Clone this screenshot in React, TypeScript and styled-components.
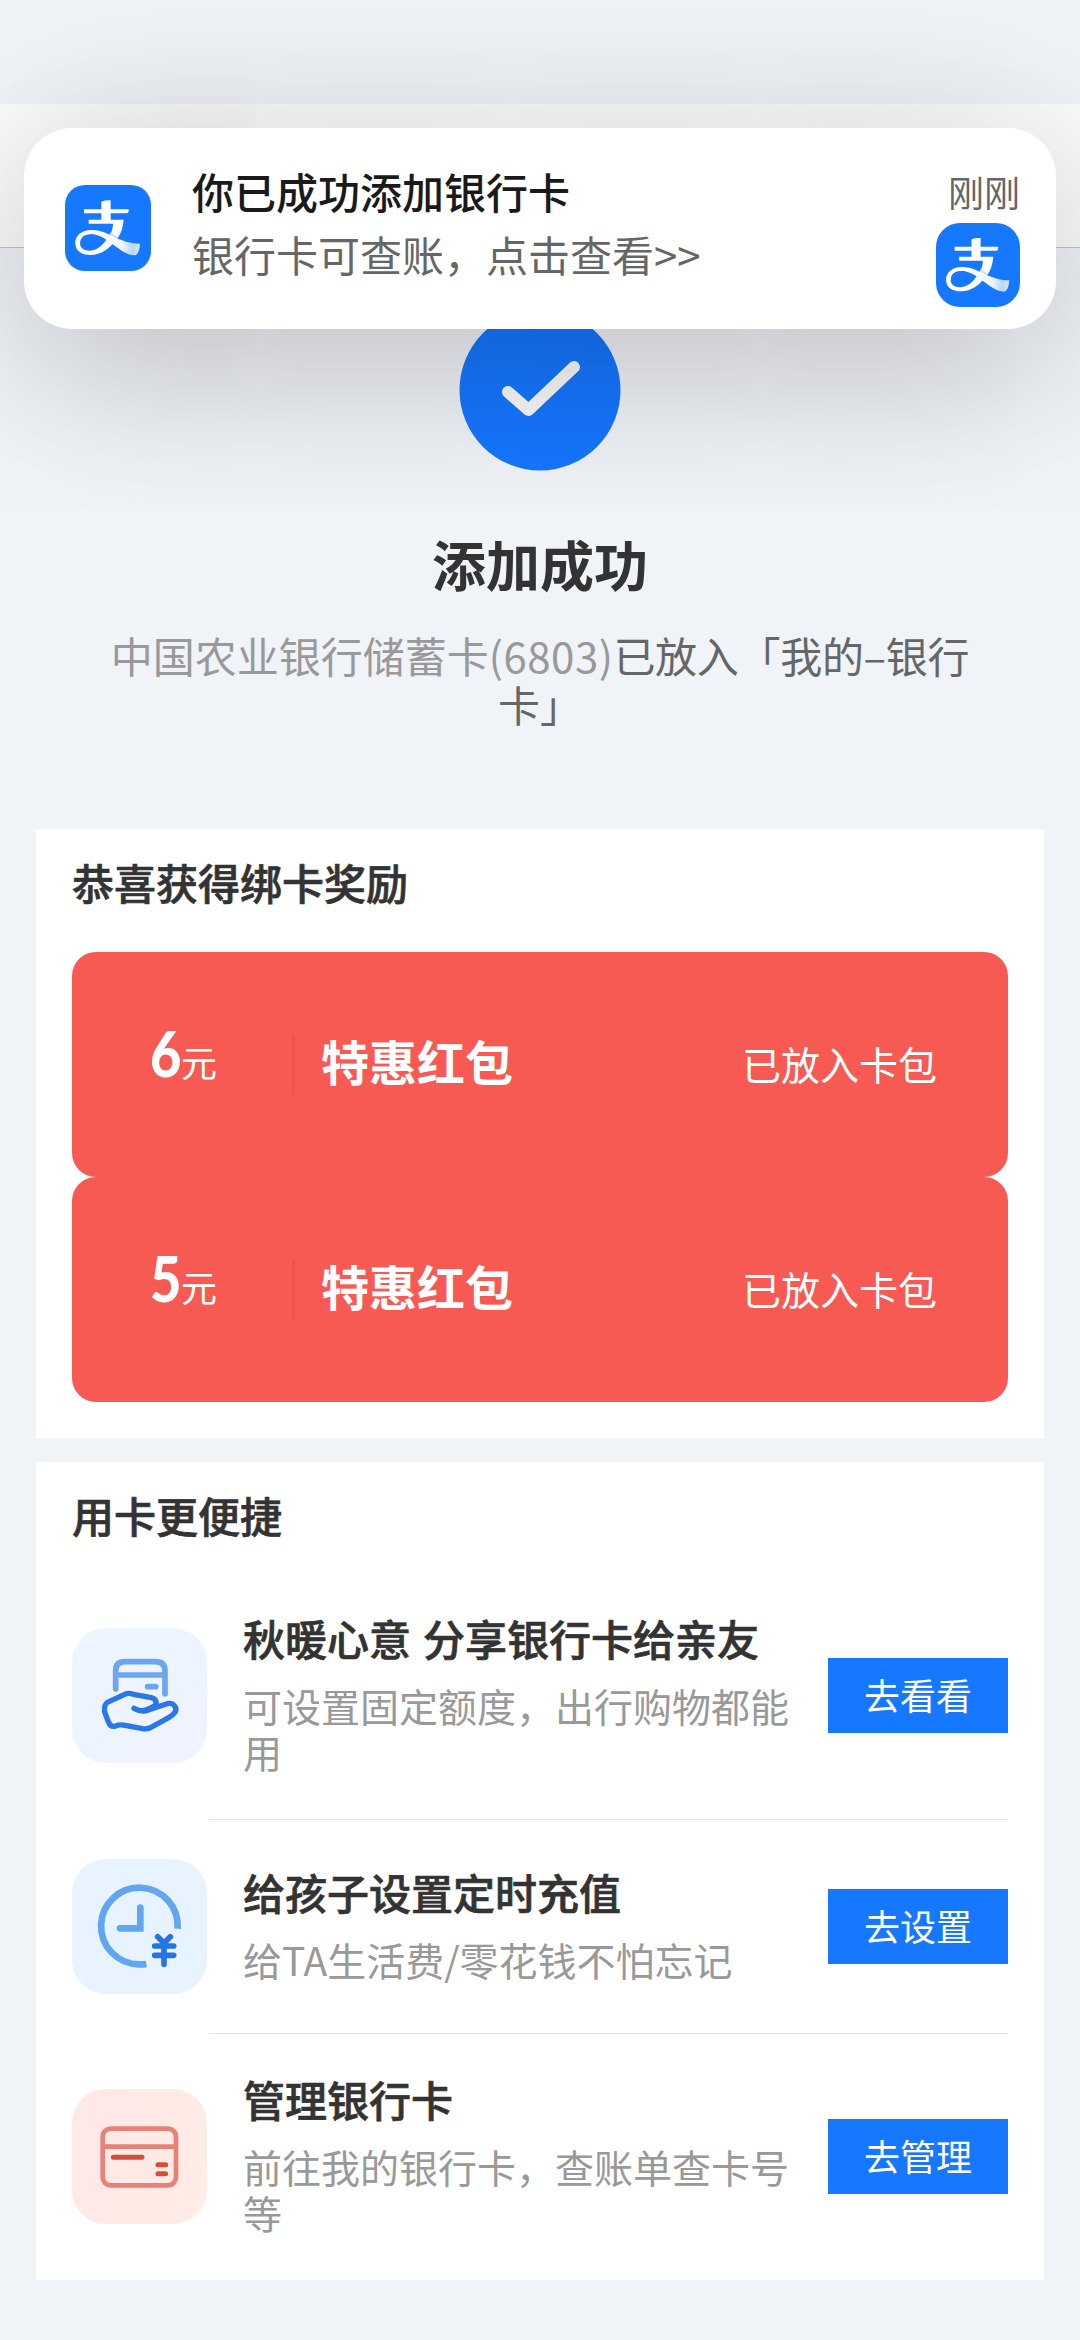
import React from "react";
import styled, { createGlobalStyle } from "styled-components";

const GlobalStyle = createGlobalStyle`
  * { box-sizing: border-box; }
  body {
    margin: 0;
    background: #f0f3f8;
    font-family: "Noto Sans CJK SC", "Noto Sans", sans-serif;
    color: #333;
  }
`;

const Screen = styled.div`
  position: relative;
  width: 1080px;
  height: 2340px;
  overflow: hidden;
  display: flex;
  flex-direction: column;
  background: #f0f3f8;
`;

const StatusBar = styled.div`
  flex: none;
  height: 104px;
`;

const NavBar = styled.header`
  flex: none;
  height: 144px;
  background: #fcfcfc;
  border-bottom: 1px solid #c3c4c6;
`;

const Notification = styled.aside`
  position: absolute;
  top: 128px;
  left: 24px;
  width: 1032px;
  height: 201px;
  padding: 0 36px 0 41px;
  display: flex;
  align-items: flex-start;
  background: #fff;
  border-radius: 48px;
  box-shadow: 0 0 170px rgba(0, 0, 0, 0.15), 0 70px 170px rgba(0, 0, 0, 0.11);
`;

const LogoTile = styled.div<{ $size: number; $radius: number }>`
  width: ${(p) => p.$size}px;
  height: ${(p) => p.$size}px;
  border-radius: ${(p) => p.$radius}px;
  background: #1677ff;
  overflow: hidden;
  svg { display: block; width: 100%; height: 100%; }
`;

const NoticeIcon = styled.div`
  padding-top: 57px;
`;

const NoticeText = styled.div`
  flex: 1;
  padding: 31px 0 0 41px;
  font-size: 42px;
  line-height: 63px;
`;

const NoticeTitle = styled.div`
  font-weight: 500;
  color: #1a1a1a;
`;

const NoticeBody = styled.div`
  color: #666;
`;

const NoticeAside = styled.div`
  display: flex;
  flex-direction: column;
  align-items: flex-end;
  gap: 12px;
  padding-top: 43px;
`;

const NoticeTime = styled.span`
  font-size: 36px;
  line-height: 40px;
  color: #666;
`;

const Hero = styled.section`
  flex: none;
  height: 581px;
  padding-top: 61px;
  display: flex;
  flex-direction: column;
  align-items: center;
`;

const SuccessMark = styled.svg`
  display: block;
  width: 162px;
  height: 162px;
`;

const HeroTitle = styled.h1`
  margin: 63px 0 0;
  font-size: 54px;
  line-height: 60px;
  font-weight: 700;
`;

const HeroDesc = styled.div`
  margin-top: 36px;
  display: flex;
  flex-direction: column;
  align-items: center;
  font-size: 42px;
  line-height: 49px;
  color: #666;
`;

const HeroLine = styled.div`
  display: flex;
  white-space: nowrap;
`;

const Muted = styled.span`
  color: #999;
`;

const CardTail = styled.span`
  color: #999;
  letter-spacing: 0.5px;
`;

const Destination = styled.span`
  letter-spacing: -0.3px;
`;

const Card = styled.section`
  flex: none;
  margin: 0 36px 24px;
  padding: 23px 36px 0;
  background: #fff;
`;

const CardTitle = styled.h2`
  margin: 0;
  font-size: 42px;
  line-height: 60px;
  font-weight: 500;
  -webkit-text-stroke: 0.7px currentColor;
`;

const CouponList = styled.div`
  padding: 40px 0 36px;
`;

const Coupon = styled.div`
  height: 225px;
  padding-right: 71px;
  display: flex;
  align-items: center;
  border-radius: 24px;
  background: #f75a53;
  color: #fff;
`;

const Amount = styled.div`
  width: 220px;
  padding: 0 0 16px 78px;
  display: flex;
  align-items: baseline;
  line-height: 60px;
`;

const AmountValue = styled.span`
  width: 31px;
  font-family: Lato, "Noto Sans CJK SC", sans-serif;
  font-size: 63px;
  font-weight: 900;
  transform: scaleX(0.86);
  transform-origin: left center;
`;

const AmountUnit = styled.span`
  font-size: 36px;
`;

const CouponRule = styled.div`
  width: 3px;
  height: 60px;
  background: #f1524e;
`;

const CouponName = styled.div`
  flex: 1;
  padding: 0 0 9px 26px;
  font-size: 48px;
  line-height: 60px;
  font-weight: 700;
`;

const CouponState = styled.div`
  padding-bottom: 4px;
  font-size: 39px;
  line-height: 60px;
`;

const TaskList = styled.div`
  padding: 27px 0 1px;
`;

const Task = styled.div<{ $height: number }>`
  display: flex;
  align-items: center;
  height: ${(p) => p.$height}px;
`;

const TaskIcon = styled.svg`
  flex: none;
  width: 135px;
  height: 135px;
  margin: 0 2px 1px 0;
  border-radius: 34px;
`;

const TaskBody = styled.div<{ $divided: boolean }>`
  flex: 1;
  height: 100%;
  padding-left: 34px;
  display: flex;
  align-items: center;
  border-bottom: ${(p) => (p.$divided ? "1px solid #e3e3e3" : "0")};
`;

const TaskText = styled.div`
  flex: 1;
  padding: 0 20px 9px 0;
`;

const TaskTitle = styled.h3`
  margin: 0 0 14px;
  font-size: 42px;
  line-height: 60px;
  font-weight: 500;
  white-space: nowrap;
  word-spacing: 2.5px;
  -webkit-text-stroke: 0.7px currentColor;
`;

const TaskDesc = styled.p`
  margin: 0;
  font-size: 39px;
  line-height: 46px;
  color: #999;
`;

const ActionButton = styled.button`
  flex: none;
  width: 180px;
  height: 75px;
  padding: 0 0 3px;
  border: 0;
  background: #1677ff;
  color: #fff;
  font-family: inherit;
  font-size: 36px;
  line-height: 60px;
`;

function AlipayMark({ id }: { id: string }) {
  return (
    <svg viewBox="31 30 258 258">
      <defs>
        <linearGradient id={`${id}-tail`} x1="150" y1="0" x2="256" y2="0" gradientUnits="userSpaceOnUse">
          <stop offset="0" stopColor="#fff" />
          <stop offset="0.5" stopColor="#eef4ff" />
          <stop offset="0.8" stopColor="#b9d5ff" />
          <stop offset="1" stopColor="#dbe9ff" />
        </linearGradient>
        <linearGradient id={`${id}-leg`} x1="196" y1="146" x2="130" y2="236" gradientUnits="userSpaceOnUse">
          <stop offset="0" stopColor="#fff" />
          <stop offset="0.35" stopColor="#c9ddfb" />
          <stop offset="0.65" stopColor="#fff" />
          <stop offset="1" stopColor="#fff" />
        </linearGradient>
      </defs>
      <path d="M140 80 Q152 75 168 76 V103 H222 V108 Q222 115 215 115 H168 V134 H207 C205 158 199 176 189 189 L166 180 C172 168 175 157 175 146 H102 V134 H140 V115 H88 V103 H140 Z" fill="#fff" />
      <path d="M168 172 L190 187 C166 222 138 240 108 240 C80 240 62 227 62 205 C62 181 84 166 112 166 L112 177 C90 177 76 187 76 204 C76 219 88 227 105 227 C132 227 154 203 168 172 Z" fill={`url(#${id}-leg)`} />
      <path d="M64 193 C70 175 88 165 113 165 C160 165 190 205 256 206 C255 222 250 241 240 241 C196 241 158 177 108 177 C88 177 76 187 76 204 L62 205 Z" fill={`url(#${id}-tail)`} />
    </svg>
  );
}

function ShareIcon() {
  return (
    <TaskIcon viewBox="6 9 405 405" fill="none" strokeLinecap="round" strokeLinejoin="round">
      <defs>
        <linearGradient id="share-bg" x1="0" y1="0" x2="0.8" y2="1">
          <stop offset="0" stopColor="#edf6ff" />
          <stop offset="1" stopColor="#eff3ff" />
        </linearGradient>
      </defs>
      <rect x="6" y="9" width="405" height="405" fill="url(#share-bg)" />
      <g stroke="#6ba5f3" strokeWidth="17">
        <path d="M137 192 V138 Q137 110 165 110 H257 Q285 110 285 138 V206" />
        <path d="M140 150 H282" strokeLinecap="butt" />
        <path d="M233 185 H257" />
      </g>
      <path
        d="M192 250 Q215 263 235 255 L291 236 C311 231 324 249 314 263 Q309 271 296 278 L245 306 Q235 313 218 311 L165 301 Q148 298 137 303 Q122 308 115 290 L104 261 Q101 240 112 232 L164 208 Q176 202 190 208 L244 218 Q262 222 258 243"
        stroke="#2878ea"
        strokeWidth="16"
      />
      <path d="M188 247 Q214 254 234 244 Q250 237 256 232 L264 240 Q252 256 232 262 Q202 266 188 247 Z" fill="#2878ea" />
    </TaskIcon>
  );
}

function ClockIcon() {
  return (
    <TaskIcon viewBox="6 9 405 405" fill="none">
      <rect x="6" y="9" width="405" height="405" fill="#e7f3fe" />
      <path d="M323 218 A115 115 0 1 0 208 325 Q218 326 229 324" stroke="#62a6f2" strokeWidth="20" />
      <path d="M211 155 V217 H150" stroke="#62a6f2" strokeWidth="20" strokeLinecap="round" />
      <path
        d="M263 242 L282 261 L301 242 M254 270 H311 M254 298 H311 M282 262 V325"
        stroke="#2474e4"
        strokeWidth="17"
        strokeLinecap="round"
      />
    </TaskIcon>
  );
}

function CardIcon() {
  return (
    <TaskIcon viewBox="6 9 405 405" fill="none">
      <defs>
        <linearGradient id="card-bg" x1="0" y1="0.3" x2="1" y2="0.7">
          <stop offset="0" stopColor="#ffe8e8" />
          <stop offset="1" stopColor="#ffece5" />
        </linearGradient>
      </defs>
      <rect x="6" y="9" width="405" height="405" fill="url(#card-bg)" />
      <rect x="98" y="128" width="220" height="170" rx="24" stroke="#e98178" strokeWidth="14" />
      <path d="M98 182 H318" stroke="#e58375" strokeWidth="14" />
      <path d="M130 214 H216 M264 236 H287 M264 263 H287" stroke="#d1503d" strokeWidth="15" strokeLinecap="round" />
    </TaskIcon>
  );
}

const coupons = [{ value: 6 }, { value: 5 }];

const tasks = [
  { icon: <ShareIcon />, title: "秋暖心意 分享银行卡给亲友", desc: "可设置固定额度，出行购物都能用", action: "去看看", height: 248 },
  { icon: <ClockIcon />, title: "给孩子设置定时充值", desc: "给TA生活费/零花钱不怕忘记", action: "去设置", height: 214 },
  { icon: <CardIcon />, title: "管理银行卡", desc: "前往我的银行卡，查账单查卡号等", action: "去管理", height: 245 },
];

export default function App() {
  return (
    <Screen>
      <GlobalStyle />
      <StatusBar />
      <NavBar />
      <Hero>
        <SuccessMark viewBox="0 0 162 162" fill="none">
          <circle cx="81" cy="81" r="80.5" fill="#1677ff" />
          <path d="M49 83 L69.500 101 L115 58" stroke="#fafafa" strokeWidth="12" strokeLinecap="round" strokeLinejoin="round" />
        </SuccessMark>
        <HeroTitle>添加成功</HeroTitle>
        <HeroDesc>
          <HeroLine>
            <Muted>中国农业银行储蓄卡</Muted>
            <CardTail>(6803)</CardTail>
            <Destination>已放入「我的–银行</Destination>
          </HeroLine>
          <HeroLine>卡」</HeroLine>
        </HeroDesc>
      </Hero>

      <Card>
        <CardTitle>恭喜获得绑卡奖励</CardTitle>
        <CouponList>
          {coupons.map((c) => (
            <Coupon key={c.value}>
              <Amount>
                <AmountValue>{c.value}</AmountValue>
                <AmountUnit>元</AmountUnit>
              </Amount>
              <CouponRule />
              <CouponName>特惠红包</CouponName>
              <CouponState>已放入卡包</CouponState>
            </Coupon>
          ))}
        </CouponList>
      </Card>

      <Card>
        <CardTitle>用卡更便捷</CardTitle>
        <TaskList>
          {tasks.map((t, i) => (
            <Task key={t.title} $height={t.height}>
              {t.icon}
              <TaskBody $divided={i < tasks.length - 1}>
                <TaskText>
                  <TaskTitle>{t.title}</TaskTitle>
                  <TaskDesc>{t.desc}</TaskDesc>
                </TaskText>
                <ActionButton>{t.action}</ActionButton>
              </TaskBody>
            </Task>
          ))}
        </TaskList>
      </Card>

      <Notification>
        <NoticeIcon>
          <LogoTile $size={86} $radius={20}>
            <AlipayMark id="app" />
          </LogoTile>
        </NoticeIcon>
        <NoticeText>
          <NoticeTitle>你已成功添加银行卡</NoticeTitle>
          <NoticeBody>银行卡可查账，点击查看&gt;&gt;</NoticeBody>
        </NoticeText>
        <NoticeAside>
          <NoticeTime>刚刚</NoticeTime>
          <LogoTile $size={84} $radius={24}>
            <AlipayMark id="thumb" />
          </LogoTile>
        </NoticeAside>
      </Notification>
    </Screen>
  );
}
